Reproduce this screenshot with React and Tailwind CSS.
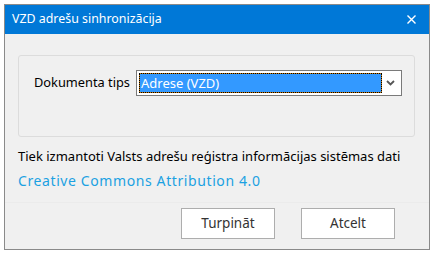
import React from 'react';

// Modal window: VZD address sync
export default function App() {
  return (
    <div className="w-[434px] h-[255px] bg-white pt-[4px] pl-[4px]" style={{ fontFamily: '"Noto Sans", "Open Sans", sans-serif' }}>
      <div className="w-[426px] h-[246px] border border-[#8a8a8a] bg-[#f0f0f0] flex flex-col">
        {/* Title bar */}
        <div className="h-[29px] bg-[#0078d7] flex items-center justify-between pl-[7px] pr-[12px] text-white text-[12.4px]">
          <span>VZD adrešu sinhronizācija</span>
          <svg width="9" height="9" viewBox="0 0 9 9" className="mr-[1px]">
            <path d="M0.5 0.5 L8.5 8.5 M8.5 0.5 L0.5 8.5" stroke="#fff" strokeWidth="1.4" />
          </svg>
        </div>

        {/* Body */}
        <div className="flex-1 flex flex-col pl-[13px] pt-[21px]">
          <div className="w-[397px] h-[82px] border border-[#dcdcdc] rounded-[3px] pl-[15px] pt-[14px]">
            <div className="flex items-center">
              <span className="text-[12.8px] text-black w-[102px]">Dokumenta tips</span>
              <div className="w-[266px] h-[26px] border border-[#7a7a7a] bg-white flex items-center pl-[2px] pr-[6px]">
                <div className="w-[243px] h-[20px] bg-[#c47a10] border border-dotted border-black">
                  <div className="h-full bg-[#3399ff] text-white text-[13px] leading-[18px] pl-[1px]">Adrese (VZD)</div>
                </div>
                <svg width="9" height="6" viewBox="0 0 9 6" className="ml-auto">
                  <path d="M1 1 L4.5 4.5 L8 1" stroke="#555" strokeWidth="1.8" fill="none" />
                </svg>
              </div>
            </div>
          </div>

          <div className="mt-[11px] text-[13px] text-black leading-[16px]">
            Tiek izmantoti Valsts adrešu reģistra informācijas sistēmas dati
          </div>
          <div className="mt-[8px] text-[14px] text-[#1ba1e2] leading-[18px] tracking-[0.6px]">
            Creative Commons Attribution 4.0
          </div>
        </div>

        {/* Footer */}
        <div className="h-[47px] border-t border-[#ebebeb] flex justify-end items-start pt-[5px] pr-[34px] gap-[26px]">
          <button className="w-[94px] h-[31px] border border-[#adadad] bg-white text-[13.5px] text-[#333]">Turpināt</button>
          <button className="w-[94px] h-[31px] border border-[#adadad] bg-white text-[13.5px] text-[#333]">Atcelt</button>
        </div>
      </div>
    </div>
  );
}
